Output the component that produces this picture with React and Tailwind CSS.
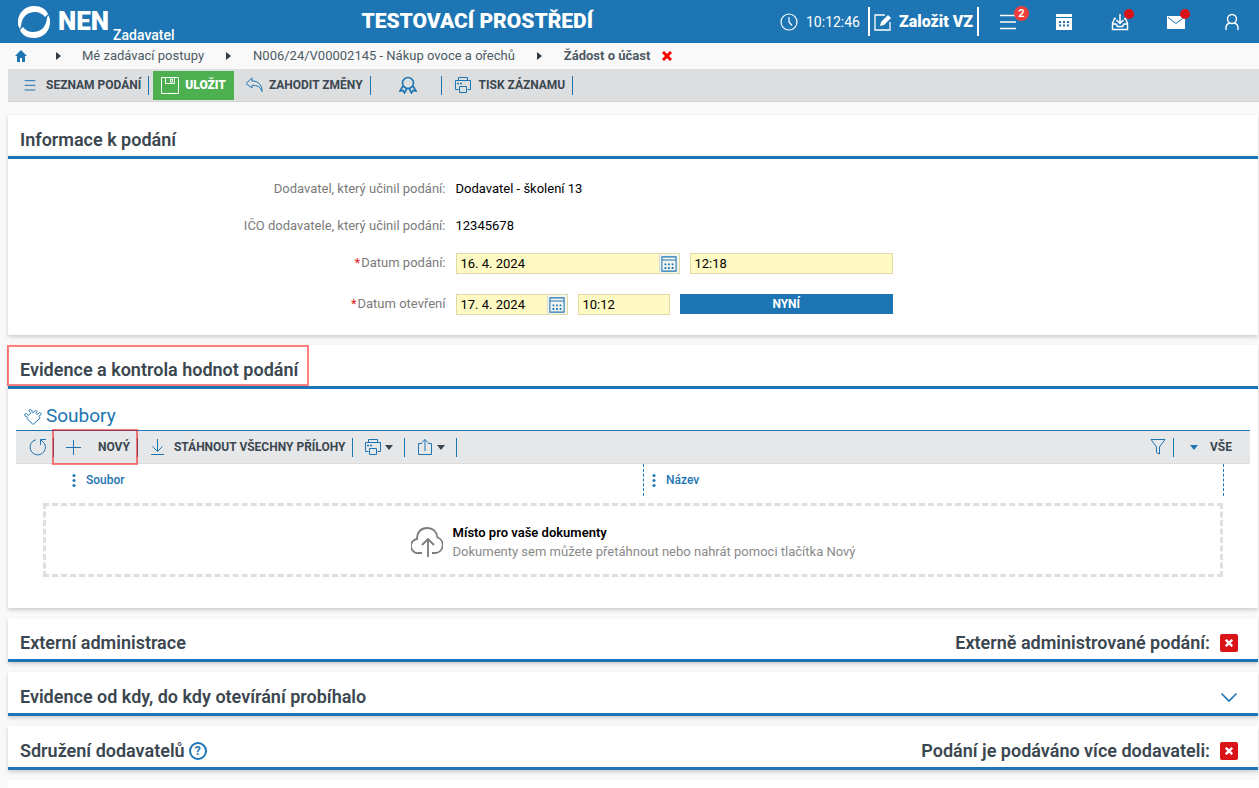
import React from 'react';

function Icon({ size = 18, className = '', width = 1, children }) {
  return (
    <svg
      width={size}
      height={size}
      viewBox="0 0 18 18"
      fill="none"
      stroke="currentColor"
      strokeWidth={width}
      className={`shrink-0 ${className}`}
      aria-hidden="true"
    >
      {children}
    </svg>
  );
}

function PrinterIcon() {
  return (
    <Icon>
      <path d="M4.5 4.5v-3h9v3M4.5 13.5h-3v-9h15v9h-3M5.5 10.5h7v6h-7z" />
      <path d="M3 7.5h2M6 7.5h2" strokeWidth="1.5" />
    </Icon>
  );
}

function CalendarIcon({ className }) {
  return (
    <Icon size={16} className={className} width={1.2}>
      <path d="M1 1h16v16H1zM1 4.5h16" />
      <path d="M4 9.5h10M4 13.5h10" strokeWidth="2" strokeDasharray="2 2" />
    </Icon>
  );
}

function CrossIcon({ className = '' }) {
  return (
    <svg width="10" height="10" viewBox="0 0 10 10" stroke="currentColor" strokeWidth="3" className={className} aria-hidden="true">
      <path d="M1 1l8 8M9 1L1 9" />
    </svg>
  );
}

function Caret({ className = '' }) {
  return (
    <svg width="8" height="5" viewBox="0 0 8 5" fill="currentColor" className={className} aria-hidden="true">
      <path d="M0 0h8L4 5z" />
    </svg>
  );
}

function Separator() {
  return <span className="w-px h-[19px] bg-[#1d75b3] shrink-0" />;
}

function BreadcrumbArrow() {
  return (
    <svg width="5" height="8" viewBox="0 0 5 8" fill="#2f3a43" aria-hidden="true">
      <path d="M0 0l5 4-5 4z" />
    </svg>
  );
}

function ToolButton({ children, className = '', label }) {
  return (
    <button
      type="button"
      aria-label={label}
      className={`flex items-center text-xs font-bold text-[#3b4750] whitespace-nowrap cursor-pointer ${className}`}
    >
      {children}
    </button>
  );
}

function Header() {
  return (
    <header className="h-[43px] bg-[#1d75b3] text-white flex items-center justify-between pl-[17px] pr-[18px]">
      <a href="#" className="flex items-center">
        <svg width="34" height="34" viewBox="0 0 34 34" fill="currentColor" aria-hidden="true">
          <path d="M1 19C0 8 8 1 17 1c7 0 12 3 14 8l-3 3c-2-3-6-5-10-5C10 7 5 12 4 21l-1 3c-1-2-2-3-2-5z" />
          <path d="M33 15c1 11-7 18-16 18-7 0-12-3-14-8l3-3c2 3 6 5 10 5 8 0 13-5 14-14l1-3c1 2 2 3 2 5z" />
        </svg>
        <span className="ml-[7px] text-[26px] font-black">NEN</span>
        <span className="self-end ml-1 text-sm font-medium leading-3">Zadavatel</span>
      </a>

      <h1 className="text-[21px] font-black">TESTOVACÍ PROSTŘEDÍ</h1>

      <div className="flex items-center">
        <Icon width={1.2}>
          <circle cx="9" cy="9" r="8" />
          <path d="M9 4v5l3 3.5" />
        </Icon>
        <time className="ml-2 mr-2 text-sm">10:12:46</time>
        <button type="button" className="h-[29px] flex items-center gap-[7px] border-x-2 border-white px-1 text-base font-black whitespace-nowrap cursor-pointer">
          <Icon width={1.3}>
            <path d="M11 2H1v15h15V9" />
            <path d="M6 13l1-4 7-7 3 3-7 7z" fill="currentColor" stroke="none" />
          </Icon>
          Založit VZ
        </button>
        <nav className="flex items-center gap-[38px] ml-5">
          <button type="button" aria-label="Menu" className="relative cursor-pointer">
            <Icon width={1.6}>
              <path d="M1 2.5h16M1 9h16M1 15.5h16" />
            </Icon>
            <span className="absolute -top-[7px] left-[15px] w-[15px] h-[15px] rounded-full bg-[#ef3e3a] text-[11px] leading-[15px] font-bold text-center">2</span>
          </button>
          <button type="button" aria-label="Kalendář" className="cursor-pointer">
            <Icon>
              <path d="M1 1h16v3H1zM1 5h16v12H1z" fill="currentColor" stroke="none" />
              <path d="M4 9h10M4 12.5h10" stroke="#1d75b3" strokeWidth="2" strokeDasharray="2 2" />
            </Icon>
          </button>
          <button type="button" aria-label="Doručené" className="relative cursor-pointer">
            <Icon width={1.5}>
              <path d="M5 5.5H3.500L1.500 10.500v6h15v-6L14.500 5.500H13M1.500 11H5l1.500 2.500h5L13 11h3.500" />
              <path d="M9 1v9M5.500 7L9 10.500 12.500 7" />
            </Icon>
            <span className="absolute -top-1 left-[13px] w-[10px] h-[10px] rounded-full bg-[#d91418]" />
          </button>
          <button type="button" aria-label="Zprávy" className="relative cursor-pointer">
            <Icon>
              <path d="M0 3h18v13H0z" fill="currentColor" stroke="none" />
              <path d="M1 4.500l8 6 8-6" stroke="#1d75b3" />
            </Icon>
            <span className="absolute -top-1 left-[13px] w-[10px] h-[10px] rounded-full bg-[#d91418]" />
          </button>
          <button type="button" aria-label="Uživatel" className="cursor-pointer">
            <Icon width={1.4}>
              <circle cx="9" cy="6" r="4.500" />
              <path d="M3 17v-2c0-3 2-4.500 4-5M15 17v-2c0-3-2-4.500-4-5" />
            </Icon>
          </button>
        </nav>
      </div>
    </header>
  );
}

function Breadcrumbs() {
  return (
    <nav className="h-[26px] flex items-center pl-[15px] text-[13px] text-[#4d5963]">
      <a href="#" aria-label="Domů" className="text-[#1d75b3]">
        <svg width="12" height="12" viewBox="0 0 12 12" fill="currentColor" aria-hidden="true">
          <path d="M6 0l6 6h-2v6H7V8H5v4H2V6H0L4 2z" />
        </svg>
      </a>
      <span className="ml-[29px] mr-[21px]"><BreadcrumbArrow /></span>
      <a href="#">Mé zadávací postupy</a>
      <span className="mx-[22px]"><BreadcrumbArrow /></span>
      <a href="#">N006/24/V00002145 - Nákup ovoce a ořechů</a>
      <span className="mx-[22px]"><BreadcrumbArrow /></span>
      <span className="font-bold">Žádost o účast</span>
      <button type="button" aria-label="Zavřít" className="ml-3 text-[#f00]">
        <CrossIcon />
      </button>
    </nav>
  );
}

function MainToolbar() {
  return (
    <div className="ml-2 h-[33px] bg-[#dddee0] border-b border-[#d3d4d5] flex items-center pl-4">
      <ToolButton className="gap-[10px] mr-[7px]">
        <Icon size={12} className="text-[#1d75b3]" width={1.5}>
          <path d="M1 2.500h16M1 9.500h16M1 16.500h16" />
        </Icon>
        SEZNAM PODÁNÍ
      </ToolButton>
      <Separator />
      <button type="button" className="ml-1 h-[29px] px-2 flex items-center gap-[6px] bg-[#4caf50] text-white text-xs font-black cursor-pointer">
        <Icon>
          <path d="M.5 1.500h17v16H.5zM4.500 1.500v6h9v-6M9.500 3h2v3h-2z" />
        </Icon>
        ULOŽIT
      </button>
      <ToolButton className="gap-[6px] ml-[11px] mr-[7px]">
        <Icon className="text-[#1d75b3]">
          <path d="M7 2L1 7.500 7 12V9.500c5-.5 8 1 10 6 0-7-4-10.500-10-10.500z" />
        </Icon>
        ZAHODIT ZMĚNY
      </ToolButton>
      <Separator />
      <ToolButton label="Podpis" className="ml-7 mr-6">
        <Icon className="text-[#1d75b3]" width={1.6}>
          <circle cx="9" cy="7" r="5.500" />
          <path d="M4 10l-3 5 3-.5 1.500 2.500L8 12.500M14 10l3 5-3-.5-1.500 2.500L10 12.500" />
        </Icon>
      </ToolButton>
      <Separator />
      <ToolButton className="gap-[7px] ml-3 mr-[7px]">
        <span className="text-[#1d75b3]"><PrinterIcon /></span>
        TISK ZÁZNAMU
      </ToolButton>
      <Separator />
    </div>
  );
}

function Section({ title, extra, children, help, marked }) {
  return (
    <section className="bg-white shadow-[0_2px_4px_rgba(0,0,0,0.18)]">
      <div className="relative h-11 border-b-[3px] border-[#1d75b3] flex items-center justify-between pt-2 pl-3 pr-5 text-lg font-semibold text-[#3b4750]">
        <h2 className="flex items-center gap-1">
          {title}
          {help && (
            <button type="button" aria-label="Nápověda" className="w-[18px] h-[18px] rounded-full border-2 border-[#1d75b3] text-[#1d75b3] text-xs leading-[14px] font-bold">
              ?
            </button>
          )}
        </h2>
        {extra}
        {marked && <span className="absolute -left-px top-0 w-[302px] h-[41px] border-2 border-[#f00]/50" />}
      </div>
      {children}
    </section>
  );
}

function NoFlag({ label }) {
  return (
    <span className="flex items-center gap-[10px]">
      {label}
      <span className="w-[18px] h-[18px] rounded-xs bg-[#d91418] text-white flex items-center justify-center">
        <CrossIcon className="w-2 h-2" />
      </span>
    </span>
  );
}

function FormRow({ label, htmlFor, required, children }) {
  return (
    <div className="flex gap-[10px] min-h-[21px]">
      <label htmlFor={htmlFor} className="w-[35%] text-right text-[13px] leading-5 text-[#7b7b7b]">
        {required && <span className="text-[#e02020] mr-px">*</span>}
        {label}
      </label>
      <div className="w-[35%] flex gap-[10px] text-[13px] leading-5 text-black">{children}</div>
    </div>
  );
}

function DateInput({ id, value, className }) {
  return (
    <div className={`flex h-[21px] border border-[#dedaa8] bg-[#fff9c4] ${className}`}>
      <input id={id} defaultValue={value} className="min-w-0 flex-1 px-1 bg-transparent outline-none" />
      <button type="button" aria-label="Vybrat datum" className="w-5 flex items-center justify-center bg-[#f5f5f0] border-l border-[#d8dadc] text-[#1d75b3]">
        <CalendarIcon />
      </button>
    </div>
  );
}

function TimeInput({ label, value, className }) {
  return (
    <input
      aria-label={label}
      defaultValue={value}
      className={`min-w-0 h-[21px] px-1 border border-[#dedaa8] bg-[#fff9c4] outline-none ${className}`}
    />
  );
}

function SubmissionInfo() {
  return (
    <div className="py-5 flex flex-col gap-5">
      <div className="flex flex-col gap-4">
        <FormRow label="Dodavatel, který učinil podání:">
          <span>Dodavatel - školení 13</span>
        </FormRow>
        <FormRow label="IČO dodavatele, který učinil podání:">
          <span>12345678</span>
        </FormRow>
        <FormRow label="Datum podání:" htmlFor="submitted" required>
          <DateInput id="submitted" value="16. 4. 2024" className="w-[224px]" />
          <TimeInput label="Čas podání" value="12:18" className="flex-1" />
        </FormRow>
      </div>
      <FormRow label="Datum otevření" htmlFor="opened" required>
        <DateInput id="opened" value="17. 4. 2024" className="w-28" />
        <TimeInput label="Čas otevření" value="10:12" className="w-[92px]" />
        <button type="button" className="flex-1 h-5 bg-[#1d75b3] text-white text-xs font-bold">
          NYNÍ
        </button>
      </FormRow>
    </div>
  );
}

function FilesToolbar() {
  return (
    <div className="h-[34px] border-t border-t-[#1d75b3] border-b border-b-[#dcdcdc] bg-[#e6e7e9] flex items-center pl-[13px] pr-[18px]">
      <ToolButton label="Obnovit" className="mr-[6px]">
        <Icon className="text-[#1d75b3]">
          <path d="M7 1.700A7.700 7.700 0 1 0 15.500 5.500L12 2M17 1.500h-5.500V7" />
        </Icon>
      </ToolButton>
      <Separator />
      <div className="relative flex items-center">
        <ToolButton className="gap-4 pl-[10px] pr-[7px]">
          <Icon className="text-[#1d75b3]">
            <path d="M9.500 2v15M2 9.500h15" />
          </Icon>
          NOVÝ
        </ToolButton>
        <Separator />
        <span className="absolute -left-[2px] -top-[9px] right-0 h-9 border-2 border-[#f00]/50" />
      </div>
      <ToolButton className="gap-2 ml-[10px] mr-[7px]">
        <Icon className="text-[#1d75b3]">
          <path d="M9.500 1v12M4.500 8.500l5 5 5-5M3 16.500h13" />
        </Icon>
        STÁHNOUT VŠECHNY PŘÍLOHY
      </ToolButton>
      <Separator />
      <ToolButton label="Tisk" className="gap-[3px] ml-[11px] mr-[11px]">
        <span className="text-[#1d75b3]"><PrinterIcon /></span>
        <Caret />
      </ToolButton>
      <Separator />
      <ToolButton label="Export" className="gap-[3px] ml-[11px] mr-[11px]">
        <Icon className="text-[#1d75b3]">
          <path d="M6 5.500H2.500v11h13v-11H12M9 13V1.500M6 4.500l3-3 3 3" />
        </Icon>
        <Caret />
      </ToolButton>
      <Separator />
      <ToolButton label="Filtr" className="ml-auto mr-[6px]">
        <Icon className="text-[#1d75b3]">
          <path d="M2 1.500h14L10.500 9v7l-3-1.500V9z" />
        </Icon>
      </ToolButton>
      <Separator />
      <ToolButton className="gap-3 ml-4">
        <Caret className="text-[#1d75b3]" />
        VŠE
      </ToolButton>
    </div>
  );
}

function ColumnHead({ children }) {
  return (
    <th className="h-8 p-0 pl-2 border-r border-dashed border-[#1d75b3] text-left text-xs font-medium text-[#1d75b3]">
      <span className="flex items-center gap-[10px]">
        <svg width="4" height="13" viewBox="0 0 4 13" fill="currentColor" aria-hidden="true">
          <circle cx="2" cy="1.500" r="1.500" />
          <circle cx="2" cy="6.500" r="1.500" />
          <circle cx="2" cy="11.500" r="1.500" />
        </svg>
        {children}
      </span>
    </th>
  );
}

function FilesTable() {
  return (
    <table className="w-full table-fixed border-separate border-spacing-0">
      <colgroup>
        <col className="w-12" />
        <col />
        <col />
        <col className="w-[26px]" />
      </colgroup>
      <thead>
        <tr>
          <td />
          <ColumnHead>Soubor</ColumnHead>
          <ColumnHead>Název</ColumnHead>
          <td />
        </tr>
      </thead>
      <tbody>
        <tr>
          <td colSpan={4} className="p-0 pt-[7px] px-[27px]">
            <div className="h-[74px] pt-1 border-[3px] border-dashed border-[#dedfe0] flex items-center justify-center gap-[10px] text-[13px]">
              <svg width="32" height="30" viewBox="0 0 32 30" fill="none" stroke="#7b7b7b" strokeWidth="1.800" aria-hidden="true">
                <path d="M11 26H8a7 7 0 0 1-2-14C6 5 10 1 16 1s10 4 10.500 9.500A8 8 0 0 1 24 26h-3" />
                <path d="M17 30V12M11 18l6-6 6 6" />
              </svg>
              <div className="leading-[19px]">
                <p className="font-semibold text-black">Místo pro vaše dokumenty</p>
                <p className="text-[#8a8a8a]">Dokumenty sem můžete přetáhnout nebo nahrát pomoci tlačítka Nový</p>
              </div>
            </div>
          </td>
        </tr>
      </tbody>
    </table>
  );
}

function Files() {
  return (
    <div className="px-2 pt-[14px] pb-[31px]">
      <h3 className="h-[27px] pl-2 flex items-center gap-1 text-[19px] text-[#1d75b3]">
        <Icon>
          <path d="M9 16.500L3 10.500c1-1 .5-1.800-.5-2C1 8.500 0 7 1 6c1-.8 2.300-.2 2.500.7.300.9 1 .8 1.800 0L6.500 5.500C7 4.500 5 4.300 5 3c0-1.300 1.500-2 2.500-1 .9 1 .2 2.300 1 2.700.8.200 1.700-1 2.500-1.700 1-.9 2-.3 1.800.7-.1.800-1.200 1-.8 1.900.6 1 1.800.9 2.300 0 .6-1 1.500-1.300 2.300-.6 1 1 .2 2.300-.9 2.500-1 .3-1 .9-.2 1.700l.7.800z" />
        </Icon>
        Soubory
      </h3>
      <FilesToolbar />
      <FilesTable />
    </div>
  );
}

export default function App() {
  return (
    <div className="min-h-screen flex flex-col bg-[#f9f9f9] font-[Roboto,sans-serif]">
      <Header />
      <Breadcrumbs />
      <MainToolbar />
      <main className="flex-1 flex flex-col gap-[10px] mt-[13px] ml-2 mr-px">
        <Section title="Informace k podání">
          <SubmissionInfo />
        </Section>
        <Section title="Evidence a kontrola hodnot podání" marked>
          <Files />
        </Section>
        <Section title="Externí administrace" extra={<NoFlag label="Externě administrované podání:" />} />
        <Section
          title="Evidence od kdy, do kdy otevírání probíhalo"
          extra={
            <button type="button" aria-label="Rozbalit" className="text-[#1d75b3]">
              <Icon width={1.6}>
                <path d="M1.500 5.500L9 13l7.500-7.500" />
              </Icon>
            </button>
          }
        />
        <Section title="Sdružení dodavatelů" help extra={<NoFlag label="Podání je podáváno více dodavateli:" />} />
        <div className="flex-1 bg-white" />
      </main>
    </div>
  );
}
